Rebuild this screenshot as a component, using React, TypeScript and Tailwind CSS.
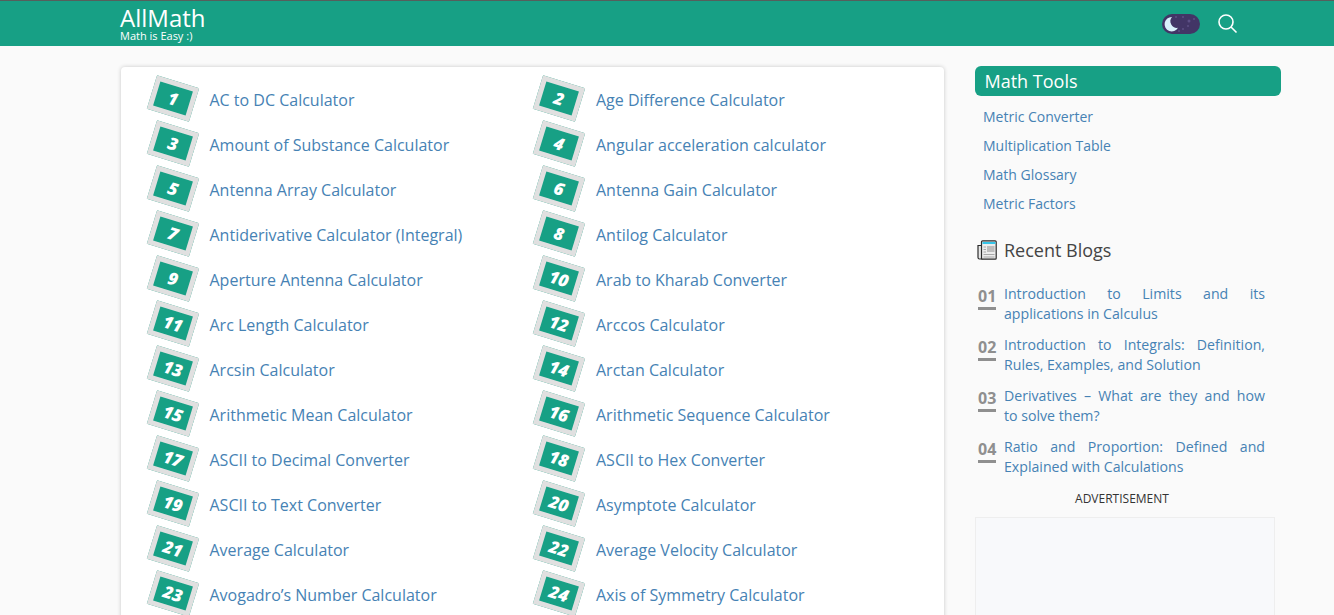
import React from "react";

const calculators: string[] = [
  "AC to DC Calculator",
  "Age Difference Calculator",
  "Amount of Substance Calculator",
  "Angular acceleration calculator",
  "Antenna Array Calculator",
  "Antenna Gain Calculator",
  "Antiderivative Calculator (Integral)",
  "Antilog Calculator",
  "Aperture Antenna Calculator",
  "Arab to Kharab Converter",
  "Arc Length Calculator",
  "Arccos Calculator",
  "Arcsin Calculator",
  "Arctan Calculator",
  "Arithmetic Mean Calculator",
  "Arithmetic Sequence Calculator",
  "ASCII to Decimal Converter",
  "ASCII to Hex Converter",
  "ASCII to Text Converter",
  "Asymptote Calculator",
  "Average Calculator",
  "Average Velocity Calculator",
  "Avogadro’s Number Calculator",
  "Axis of Symmetry Calculator",
];

const tools = ["Metric Converter", "Multiplication Table", "Math Glossary", "Metric Factors"];

const blogs = [
  "Introduction to Limits and its applications in Calculus",
  "Introduction to Integrals: Definition, Rules, Examples, and Solution",
  "Derivatives – What are they and how to\u00a0solve them?",
  "Ratio and Proportion: Defined and Explained with Calculations",
];

const ThemeToggle = () => (
  <svg width="38" height="20" viewBox="0 0 38 20" className="block">
    <rect width="38" height="20" rx="10" fill="#423566" />
    <path d="M10 3a7.2 7.2 0 1 0 6 10.8a6.6 6.6 0 0 1 -6 -10.8z" fill="#d9f1fb" />
    <circle cx="14" cy="3" r="1" fill="#5c4f85" />
    <circle cx="21" cy="3" r="1" fill="#5c4f85" />
    <circle cx="27" cy="7" r="1.5" fill="#5c4f85" />
    <circle cx="21" cy="15" r="1" fill="#5c4f85" />
    <circle cx="17" cy="17" r="1" fill="#5c4f85" />
    <circle cx="32" cy="5" r="1" fill="#5c4f85" />
    <circle cx="26" cy="12" r="1" fill="#5c4f85" />
  </svg>
);

const SearchIcon = () => (
  <svg width="20" height="20" viewBox="0 0 20 20" fill="none" stroke="#ffffff" className="block">
    <circle cx="8" cy="8" r="7" strokeWidth="1.6" />
    <path d="M13 13l5.5 5.5" strokeWidth="1.6" />
  </svg>
);

const BlogIcon = () => (
  <svg width="20" height="20" viewBox="0 0 20 20" className="block">
    <path d="M1 5.5h4v13.5h-2.5a1.5 1.5 0 0 1 -1.5 -1.5z" fill="#e8e8e8" stroke="#2b2b2b" strokeWidth="1.2" />
    <rect x="4.5" y="0.8" width="14.7" height="18.4" rx="1" fill="#ececec" stroke="#2b2b2b" strokeWidth="1.2" />
    <rect x="5.5" y="2" width="13" height="2" fill="#35c4e8" />
    <rect x="10" y="6" width="7.5" height="6" fill="#bdbdbd" />
    <path d="M6.5 7h2.5M6.5 9.5h2.5M6.5 12h2.5M6.5 14.5h11M6.5 17h11" stroke="#a8a8a8" strokeWidth="1" />
  </svg>
);

const CalculatorRow = ({ index, name }: { index: number; name: string }) => (
  <a className="flex h-[45px] items-center">
    <div className="mb-[2px] ml-[29.5px] flex h-[35px] w-[44px] shrink-0 rotate-[17deg] items-center justify-center border-[5px] border-[#e0e0e0] bg-[#17a085]">
      <span className="text-[17px] font-extrabold italic leading-none text-white">{index}</span>
    </div>
    <span className="ml-[15px] text-[16px] text-[#4682b4]">{name}</span>
  </a>
);

const App: React.FC = () => {
  return (
    <div className="h-screen overflow-hidden bg-[#fafafa] font-['Open_Sans',sans-serif]">
      <header className="flex h-[46px] items-center border-t border-t-[#555f5c] bg-[#17a085] pl-[120px] pr-[96px]">
        <div className="text-white">
          <div className="text-[24px] leading-[24px]">AllMath</div>
          <div className="text-[11px] font-medium leading-[12px]">Math is Easy :)</div>
        </div>
        <div className="ml-auto flex items-center gap-[18px]">
          <ThemeToggle />
          <SearchIcon />
        </div>
      </header>

      <div className="flex pl-[121px] pt-[20px]">
        <main className="mt-px h-[620px] w-[823px] rounded-[4px] bg-white pt-[10px] shadow-[0_0_4px_rgba(0,0,0,0.2)]">
          <div className="grid grid-cols-[386.5px_1fr]">
            {calculators.map((name, i) => (
              <CalculatorRow key={name} index={i + 1} name={name} />
            ))}
          </div>
        </main>

        <aside className="ml-[31px] w-[306px]">
          <h2 className="h-[30px] rounded-[6px] bg-[#17a085] pl-[9.5px] text-[18px] leading-[30px] text-white">
            Math Tools
          </h2>
          <ul className="mt-[6px] pl-2">
            {tools.map((tool) => (
              <li key={tool} className="h-[29px] text-[14px] leading-[29px] text-[#4682b4]">
                {tool}
              </li>
            ))}
          </ul>

          <div className="mt-[17px] flex h-[30px] items-center pl-[2px]">
            <BlogIcon />
            <h3 className="ml-[7px] text-[18px] font-normal text-[#444444]">Recent Blogs</h3>
          </div>

          <ol className="mt-[19px] w-[290px]">
            {blogs.map((blog, i) => (
              <li key={blog} className="mb-[11px] flex">
                <div className="ml-[3px] w-[26px] shrink-0">
                  <div className="w-[18px] border-b-[3px] border-b-[#8f8f8f] pb-px pt-[2px] text-[16px] font-bold leading-[20px] text-[#8f8f8f]">
                    {`0${i + 1}`}
                  </div>
                </div>
                <p className="text-justify text-[14.15px] leading-[20px] text-[#4682b4]">{blog}</p>
              </li>
            ))}
          </ol>

          <div className="mt-[12px] w-[300px]">
            <div className="pr-[6px] text-center text-[12px] leading-[20px] text-[#333333]">ADVERTISEMENT</div>
            <div className="mt-[8px] h-[200px] border border-[#eeeeee] bg-[#f8f9fb]" />
          </div>
        </aside>
      </div>
    </div>
  );
};

export default App;
